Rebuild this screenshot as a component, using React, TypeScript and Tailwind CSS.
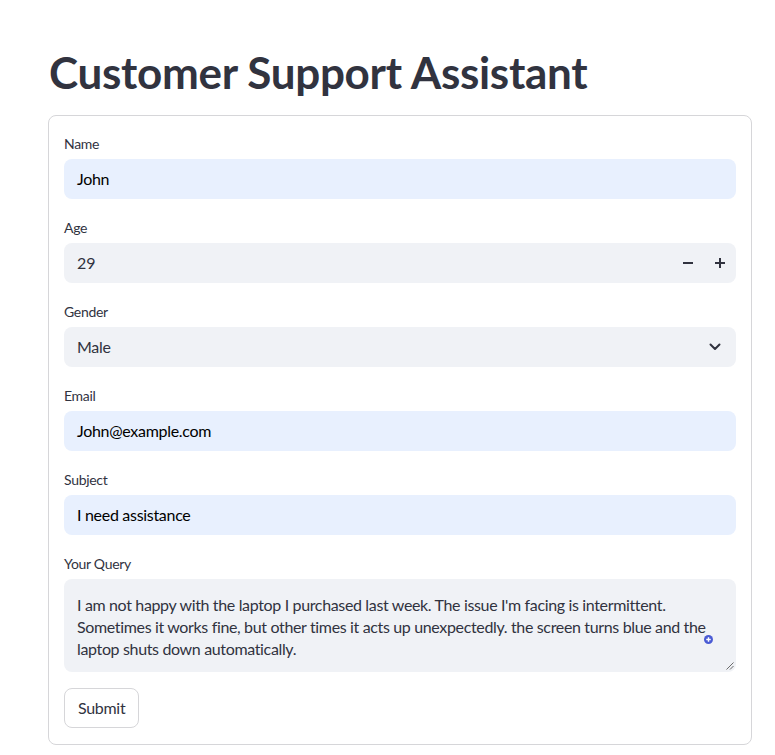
import React from 'react';

// Form field label, Streamlit style
const FieldLabel: React.FC<{ text: string }> = ({ text }) => (
  <div className="h-6 mb-1 flex items-center text-[14px] text-[#31333f] tracking-[-0.3px]">{text}</div>
);

const TextField: React.FC<{ label: string; value: string; autofill?: boolean }> = ({ label, value, autofill }) => (
  <div className="flex flex-col">
    <FieldLabel text={label} />
    <div
      className={`h-10 rounded-lg px-[13px] flex items-center text-[16px] tracking-[-0.3px] ${
        autofill ? 'bg-[#e8f0fe] text-black' : 'bg-[#f0f2f6] text-[#31333f]'
      }`}
    >
      {value}
    </div>
  </div>
);

const App: React.FC = () => {
  const queryLines = [
    "I am not happy with the laptop I purchased last week. The issue I'm facing is intermittent.",
    'Sometimes it works fine, but other times it acts up unexpectedly. the screen turns blue and the',
    'laptop shuts down automatically.',
  ];

  return (
    <div className="min-h-screen bg-white text-[#31333f]" style={{ fontFamily: 'Lato, "Noto Sans", sans-serif' }}>
      <div className="pl-12 pr-6 pt-[44px]">
        {/* Title */}
        <h1 className="text-[44px] font-bold leading-[56px] text-[#31333f] pl-px mb-[15px] tracking-[-0.3px]">
          Customer Support Assistant
        </h1>

        {/* Form */}
        <div className="w-[704px] border border-[#d6d6d9] rounded-lg px-[15px] pt-[15px] pb-4 flex flex-col gap-4">
          <TextField label="Name" value="John" autofill />

          {/* Age number input */}
          <div className="flex flex-col">
            <FieldLabel text="Age" />
            <div className="h-10 rounded-lg bg-[#f0f2f6] pl-[13px] flex items-center text-[16px]">
              <span className="flex-1">29</span>
              <button className="w-8 h-10 flex items-center justify-center">
                <svg width="10" height="2" viewBox="0 0 10 2"><rect width="10" height="2" fill="#31333f" /></svg>
              </button>
              <button className="w-8 h-10 flex items-center justify-center">
                <svg width="10" height="10" viewBox="0 0 10 10">
                  <rect y="4" width="10" height="2" fill="#31333f" />
                  <rect x="4" width="2" height="10" fill="#31333f" />
                </svg>
              </button>
            </div>
          </div>

          {/* Gender select */}
          <div className="flex flex-col">
            <FieldLabel text="Gender" />
            <div className="h-10 rounded-lg bg-[#f0f2f6] pl-[13px] pr-[15px] flex items-center text-[16px] tracking-[-0.3px]">
              <span className="flex-1">Male</span>
              <svg width="12" height="8" viewBox="0 0 12 8" fill="none">
                <path d="M1.5 1.5 6 6l4.5-4.5" stroke="#31333f" strokeWidth="2" strokeLinecap="round" strokeLinejoin="round" />
              </svg>
            </div>
          </div>

          <TextField label="Email" value="John@example.com" autofill />
          <TextField label="Subject" value="I need assistance" autofill />

          {/* Query textarea */}
          <div className="flex flex-col">
            <FieldLabel text="Your Query" />
            <div className="relative h-[93px] rounded-lg bg-[#f0f2f6] px-[13px] pt-[15px] text-[16px] leading-[22px] tracking-[-0.35px]">
              {queryLines.map((line) => (
                <div key={line} className="whitespace-nowrap">{line}</div>
              ))}
              {/* grammar extension badge */}
              <svg className="absolute right-[23px] top-[56px]" width="9" height="9" viewBox="0 0 10 10">
                <circle cx="5" cy="5" r="5" fill="#4a5bd4" />
                <rect x="2.5" y="4.2" width="5" height="1.6" fill="#fff" />
                <rect x="4.2" y="2.5" width="1.6" height="5" fill="#fff" />
              </svg>
              {/* resize handle */}
              <svg className="absolute right-[2px] bottom-[2px]" width="8" height="8" viewBox="0 0 8 8">
                <path d="M7.5 0.5 0.5 7.5M7.5 4 4 7.5" stroke="#6b6b6b" strokeWidth="1" />
              </svg>
            </div>
          </div>

          <div>
            <button className="h-10 px-[13px] rounded-lg border border-[#d6d6d9] bg-white text-[16px] text-[#31333f] tracking-[-0.3px]">
              Submit
            </button>
          </div>
        </div>
      </div>
    </div>
  );
};

export default App;
